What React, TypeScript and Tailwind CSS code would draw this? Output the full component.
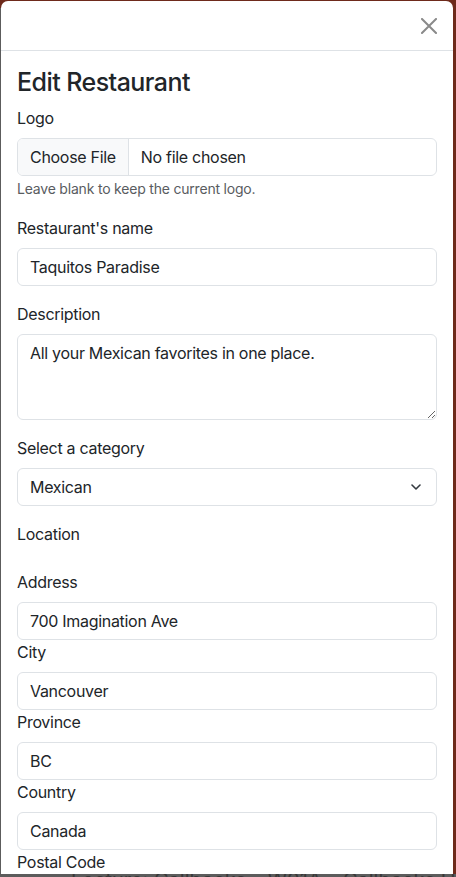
import React from "react";

const font = "font-['Inter','Liberation_Sans',sans-serif]";

function Label({ children, className = "" }: { children: React.ReactNode; className?: string }) {
  return <div className={`text-[16px] leading-[24px] tracking-[-0.3px] text-[#212529] ${className}`}>{children}</div>;
}

function Input({ value }: { value: string }) {
  return (
    <input
      readOnly
      value={value}
      className={`${font} block w-full h-[38px] border border-[#dee2e6] rounded-[6px] px-3 text-[16px] tracking-[-0.3px] text-[#212529] bg-white outline-none`}
    />
  );
}

export default function App() {
  return (
    <div className={`${font} w-[456px] h-[877px] overflow-hidden bg-[#5c5c5c]`}>
      <div className="h-px bg-[#6e2a1b]" />
      <div className="flex h-[873px] bg-[#6e2a1b]">
        <div className="w-px bg-[#5c5c5c] mt-[7px]" />
        <div className="w-[452px] bg-white rounded-t-[7px] overflow-hidden">
          <div className="h-[50px] border-b border-[#dee2e6] flex items-center justify-end pr-[16px]">
            <svg width="16" height="16" viewBox="0 0 16 16" className="block">
              <path d="M1 1 L15 15 M15 1 L1 15" stroke="#8a8a8a" strokeWidth="2" fill="none" strokeLinecap="square" />
            </svg>
          </div>
          <div className="px-4 pt-4">
            <h2 className="text-[25px] leading-[30px] font-medium text-[#212529] mb-[9px] tracking-[-0.55px]">Edit Restaurant</h2>

            <Label className="mb-2">Logo</Label>
            <div className="flex h-[38px] border border-[#dee2e6] rounded-[6px] overflow-hidden text-[16px] tracking-[-0.3px] text-[#212529]">
              <div className="bg-[#f8f9fa] border-r border-[#dee2e6] px-3 flex items-center">Choose File</div>
              <div className="pl-3 flex items-center">No file chosen</div>
            </div>
            <div className="mt-[3px] text-[14px] leading-[20px] tracking-[-0.2px] text-[#595c5f] mb-[17px]">Leave blank to keep the current logo.</div>

            <Label className="mb-2">Restaurant's name</Label>
            <div className="mb-4">
              <Input value="Taquitos Paradise" />
            </div>

            <Label className="mb-2">Description</Label>
            <textarea
              readOnly
              value="All your Mexican favorites in one place."
              className={`${font} block w-full h-[86px] border border-[#dee2e6] rounded-[6px] px-3 py-[6px] text-[16px] leading-[24px] tracking-[-0.3px] text-[#212529] bg-white outline-none resize-y mb-4`}
            />

            <Label className="mb-2">Select a category</Label>
            <div className="mb-4 h-[38px] border border-[#dee2e6] rounded-[6px] px-3 flex items-center justify-between text-[16px] tracking-[-0.3px] text-[#212529]">
              <span>Mexican</span>
              <svg width="10" height="6" viewBox="0 0 10 6" className="block mr-[3px]">
                <path d="M1 1 L5 5 L9 1" stroke="#343a40" strokeWidth="1.6" fill="none" strokeLinecap="round" strokeLinejoin="round" />
              </svg>
            </div>

            <Label className="mb-6">Location</Label>

            <Label className="mb-2">Address</Label>
            <Input value="700 Imagination Ave" />
            <Label className="mb-2">City</Label>
            <Input value="Vancouver" />
            <Label className="mb-2">Province</Label>
            <Input value="BC" />
            <Label className="mb-2">Country</Label>
            <Input value="Canada" />
            <Label>Postal Code</Label>
          </div>
        </div>
        <div className="flex-1" />
      </div>
      <div className="h-[3px] overflow-hidden">
        <div className="ml-[71px] -mt-[4px] text-[20px] leading-[20px] text-[#383838] whitespace-nowrap">
          Lecture: Callbacks – W01A – Callbacks Hello
        </div>
      </div>
    </div>
  );
}
